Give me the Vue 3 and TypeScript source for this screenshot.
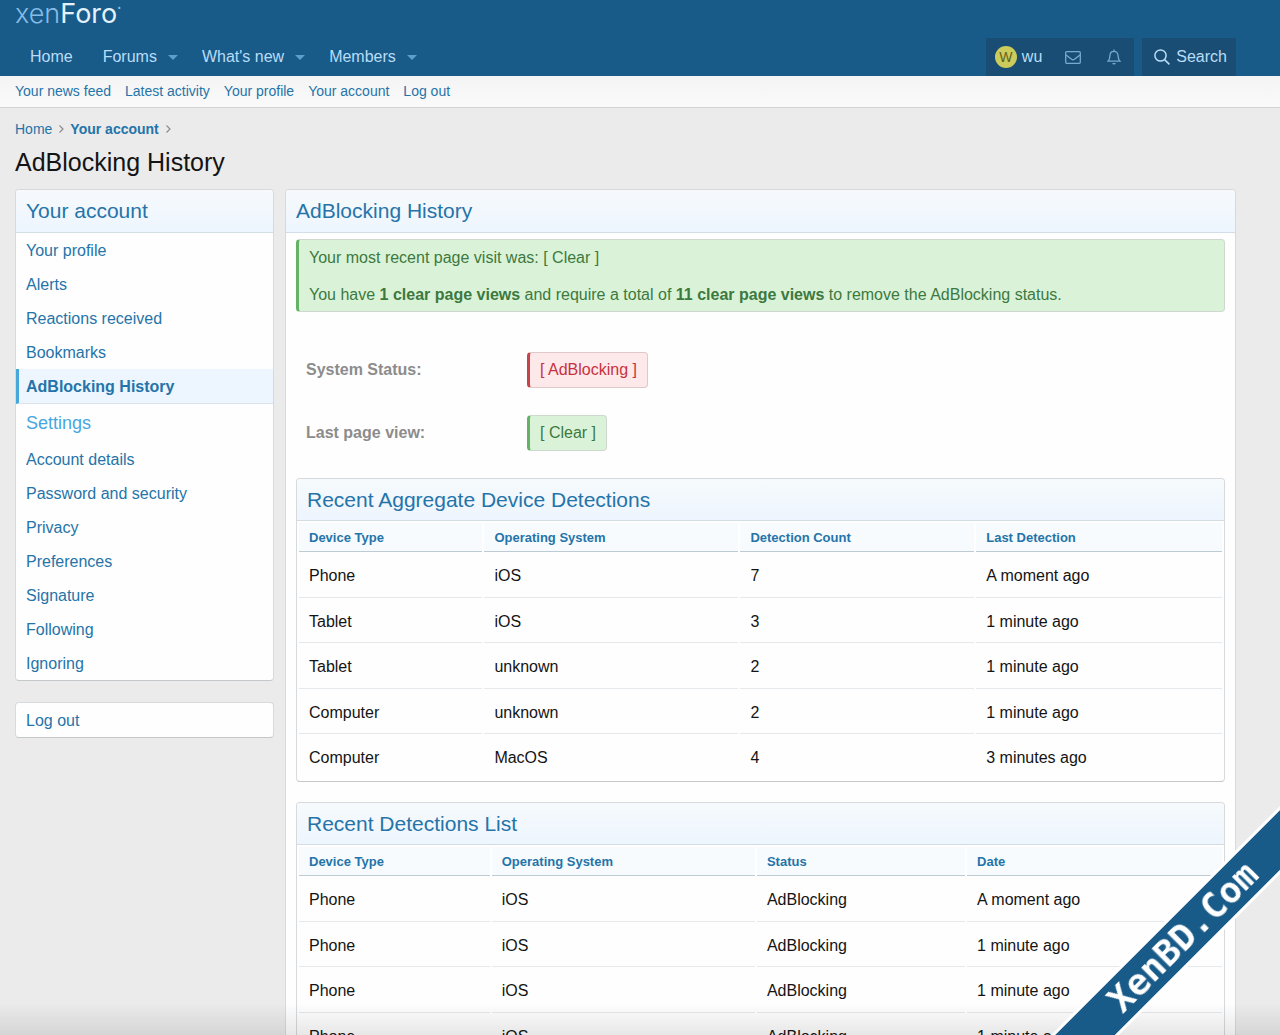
<script setup lang="ts">
interface NavItem {
  label: string
  menu: boolean
}

interface DataTable {
  id: string
  title: string
  columns: string[]
  rows: string[][]
}

const navItems: NavItem[] = [
  { label: 'Home', menu: false },
  { label: 'Forums', menu: true },
  { label: "What's new", menu: true },
  { label: 'Members', menu: true },
]

const subLinks: string[] = ['Your news feed', 'Latest activity', 'Your profile', 'Your account', 'Log out']

const accountLinks: string[] = ['Your profile', 'Alerts', 'Reactions received', 'Bookmarks', 'AdBlocking History']
const settingsLinks: string[] = [
  'Account details',
  'Password and security',
  'Privacy',
  'Preferences',
  'Signature',
  'Following',
  'Ignoring',
]
const current = 'AdBlocking History'

const tables: DataTable[] = [
  {
    id: 'aggregate',
    title: 'Recent Aggregate Device Detections',
    columns: ['Device Type', 'Operating System', 'Detection Count', 'Last Detection'],
    rows: [
      ['Phone', 'iOS', '7', 'A moment ago'],
      ['Tablet', 'iOS', '3', '1 minute ago'],
      ['Tablet', 'unknown', '2', '1 minute ago'],
      ['Computer', 'unknown', '2', '1 minute ago'],
      ['Computer', 'MacOS', '4', '3 minutes ago'],
    ],
  },
  {
    id: 'list',
    title: 'Recent Detections List',
    columns: ['Device Type', 'Operating System', 'Status', 'Date'],
    rows: [
      ['Phone', 'iOS', 'AdBlocking', 'A moment ago'],
      ['Phone', 'iOS', 'AdBlocking', '1 minute ago'],
      ['Phone', 'iOS', 'AdBlocking', '1 minute ago'],
      ['Phone', 'iOS', 'AdBlocking', '1 minute ago'],
    ],
  },
]
</script>

<template>
  <div class="page">
    <header class="top">
      <a class="logo" href="#"><span class="logo-xen">xen</span>Foro<span class="logo-dot">•</span></a>
      <nav class="nav">
        <ul class="nav-list">
          <li v-for="item in navItems" :key="item.label" class="nav-item">
            <a href="#">{{ item.label }}</a>
            <button v-if="item.menu" class="caret" type="button" :aria-label="'Toggle ' + item.label">
              <svg width="10" height="5" viewBox="0 0 10 5"><path d="M0 0h10L5 5z" fill="currentColor" /></svg>
            </button>
          </li>
        </ul>
        <div class="tools">
          <div class="tool-group">
            <a class="user" href="#"><span class="avatar">W</span>wu</a>
            <button class="icon-btn" type="button" aria-label="Conversations">
              <svg width="16" height="13" viewBox="0 0 16 13" fill="none" stroke="currentColor" stroke-width="1.3">
                <rect x=".7" y=".7" width="14.6" height="11.6" rx="1" />
                <path d="M1 4l5.600 4.300q1.400 1 2.800 0L15 4" />
              </svg>
            </button>
            <button class="icon-btn" type="button" aria-label="Alerts">
              <svg width="14" height="16" viewBox="0 0 14 16" fill="none" stroke="currentColor" stroke-width="1.3">
                <path d="M7 .4v1.800M1 12.200h12c-1.300-1.300-1.900-2.300-1.900-5.200 0-2.800-1.700-4.600-4.100-4.600S2.900 4.200 2.900 7c0 2.900-.6 3.900-1.900 5.200z" />
                <path d="M5.300 14a1.700 1.500 0 0 0 3.400 0z" fill="currentColor" stroke="none" />
              </svg>
            </button>
          </div>
          <button class="search" type="button">
            <svg width="16" height="16" viewBox="0 0 16 16" fill="none" stroke="currentColor" stroke-width="1.5">
              <circle cx="6.500" cy="6.500" r="5.600" />
              <path d="M10.600 10.600L15.400 15.400" />
            </svg>
            Search
          </button>
        </div>
      </nav>
    </header>

    <nav class="subnav">
      <a v-for="link in subLinks" :key="link" href="#">{{ link }}</a>
    </nav>

    <div class="body">
      <nav class="crumbs">
        <a href="#">Home</a>
        <svg width="5" height="8" viewBox="0 0 5 8"><path d="M.5.5L4 4 .5 7.500" fill="none" stroke="#8c8c8c" stroke-width="1.200" /></svg>
        <a class="strong" href="#">Your account</a>
        <svg width="5" height="8" viewBox="0 0 5 8"><path d="M.5.5L4 4 .5 7.500" fill="none" stroke="#8c8c8c" stroke-width="1.200" /></svg>
      </nav>
      <h1>AdBlocking History</h1>

      <div class="columns">
        <aside class="side">
          <div class="block">
            <h2 class="block-head outer">Your account</h2>
            <a v-for="link in accountLinks" :key="link" class="side-link" :class="{ active: link === current }" href="#">{{ link }}</a>
            <h3 class="side-sub">Settings</h3>
            <a v-for="link in settingsLinks" :key="link" class="side-link" href="#">{{ link }}</a>
          </div>
          <div class="block">
            <a class="side-link" href="#">Log out</a>
          </div>
        </aside>

        <main class="block main">
          <h2 class="block-head outer">AdBlocking History</h2>
          <div class="main-body">
            <div class="notice good">
              <p>Your most recent page visit was: [ Clear ]</p>
              <p>You have <strong>1 clear page views</strong> and require a total of <strong>11 clear page views</strong> to remove the AdBlocking status.</p>
            </div>

            <dl class="facts">
              <div class="fact">
                <dt>System Status:</dt>
                <dd class="badge bad">[ AdBlocking ]</dd>
              </div>
              <div class="fact">
                <dt>Last page view:</dt>
                <dd class="badge good">[ Clear ]</dd>
              </div>
            </dl>

            <section v-for="table in tables" :key="table.id" class="block">
              <h2 class="block-head">{{ table.title }}</h2>
              <table :class="table.id">
                <thead>
                  <tr>
                    <th v-for="column in table.columns" :key="column" scope="col">{{ column }}</th>
                  </tr>
                </thead>
                <tbody>
                  <tr v-for="(row, r) in table.rows" :key="r">
                    <td v-for="(cell, c) in row" :key="c">{{ cell }}</td>
                  </tr>
                </tbody>
              </table>
            </section>
          </div>
        </main>
      </div>
    </div>

    <div class="shade"></div>
    <div class="ribbon">XenBD.Com</div>
  </div>
</template>

<style>
body {
  margin: 0;
  background: #ebebeb;
}
</style>

<style scoped>
.page {
  height: 100vh;
  overflow: hidden;
  background: #ebebeb;
  color: #141414;
  font: 16px/22px "Liberation Sans", Arial, sans-serif;
}

a {
  color: #2574a9;
  text-decoration: none;
}

h1,
h2,
h3,
p,
dl,
dd,
ul {
  margin: 0;
  padding: 0;
  font-weight: 400;
}

button {
  display: flex;
  align-items: center;
  border: 0;
  padding: 0;
  background: none;
  color: inherit;
  font: inherit;
}

.top {
  padding: 0 44px 0 15px;
  background: #185a88;
}

.logo {
  display: block;
  height: 38px;
  color: #e3f2fc;
  font: 400 27px/28px Inter, sans-serif;
}

.logo-xen {
  color: #86bce6;
  font-weight: 300;
}

.logo-dot {
  color: #86bce6;
  font-size: 7px;
  line-height: 1px;
  vertical-align: 13px;
}

.nav {
  display: flex;
  justify-content: space-between;
  height: 38px;
  color: #b8ddf8;
}

.nav a {
  color: inherit;
}

.nav-list {
  display: flex;
  gap: 24px;
  padding-left: 15px;
  list-style: none;
}

.nav-item {
  display: flex;
  align-items: center;
  gap: 11px;
}

.nav-item:first-child {
  margin-right: 6px;
}

.caret {
  color: #5f9dcb;
}

.tools {
  display: flex;
  gap: 8px;
}

.tool-group,
.search {
  display: flex;
  align-items: center;
  background: #194d73;
}

.tool-group {
  gap: 26px;
  padding: 0 13px 0 9px;
}

.user {
  display: flex;
  align-items: center;
  gap: 5px;
  margin-right: -3px;
}

.avatar {
  width: 22px;
  border-radius: 50%;
  background: #cccc5c;
  color: #62621f;
  font-size: 14px;
  text-align: center;
}

.icon-btn {
  color: #76abd2;
}

.search {
  gap: 6px;
  padding: 0 9px 0 12px;
}

.subnav {
  display: flex;
  gap: 14px;
  padding: 0 15px;
  border-bottom: 1px solid #d4d4d4;
  background: linear-gradient(#f4f4f4, #fafafa);
  font-size: 14px;
  line-height: 31px;
}

.body {
  padding: 10px 44px 0 15px;
}

.crumbs {
  display: flex;
  align-items: center;
  gap: 7px;
  font-size: 14px;
}

.crumbs .strong {
  margin-left: -1px;
  font-weight: 700;
}

h1 {
  padding: 6px 0 11px;
  font-size: 25px;
  line-height: 32px;
}

.columns {
  display: flex;
  align-items: flex-start;
  gap: 11px;
}

.side {
  flex: 0 0 259px;
}

.main {
  flex: 1;
}

.block {
  box-sizing: border-box;
  margin-bottom: 21px;
  border: 1px solid #d6dadd;
  border-bottom-color: #c4c8ca;
  border-radius: 4px;
  background: #fefefe;
  overflow: hidden;
}

.main .block {
  margin-bottom: 20px;
}

.block-head {
  padding: 10px;
  border-bottom: 1px solid #d3dde4;
  background: linear-gradient(#f6fafc, #edf5fe);
  color: #2574a9;
  font-size: 21px;
  line-height: 21px;
}

.outer {
  padding-bottom: 11px;
}

.side-link {
  display: block;
  padding: 7px 10px 5px;
}

.active {
  padding-left: 7px;
  border-left: 3px solid #47a7d8;
  border-bottom: 1px solid #dae3ea;
  background: #edf5fe;
  font-weight: 700;
}

.side-sub {
  padding: 8px 10px;
  color: #47a7e0;
  font-size: 18px;
  line-height: 22px;
}

.main-body {
  padding: 6px 10px;
}

.notice,
.badge {
  border: 1px solid #cfd8cf;
  border-left-width: 3px;
  border-radius: 4px;
  padding: 7px 10px;
}

.notice p + p {
  margin-top: 15px;
}

.notice.notice {
  padding: 7px 10px 5px;
}

.good {
  border-left-color: #63b265;
  background: #daf3d8;
  color: #3d793f;
}

.bad {
  border-color: #e0c8c8;
  border-left-color: #c84448;
  background: #fde9e9;
  color: #c8323e;
}

.facts {
  display: flex;
  flex-direction: column;
  gap: 27px;
  padding: 40px 10px 27px;
}

.fact {
  display: flex;
  align-items: center;
}

.badge {
  padding: 6px 10px;
}

dt {
  flex: 0 0 221px;
  color: #8c8c8c;
  font-weight: 700;
}

table {
  width: 100%;
  table-layout: fixed;
  border-spacing: 2px;
}

th,
td {
  box-sizing: border-box;
  padding: 0 10px;
  text-align: left;
}

th {
  height: 29px;
  border-bottom: 1px solid #bccbd4;
  background: #f7fbfd;
  color: #2574a9;
  font-size: 13px;
  line-height: 15px;
}

td {
  height: 44px;
  padding-top: 1px;
  border-bottom: 1px solid #e6e9eb;
}

tr:nth-child(even) td {
  height: 43px;
}

tr:last-child td {
  height: 43px;
  border-bottom: 0;
}

.aggregate th:nth-child(1) {
  width: 20%;
}

.aggregate th:nth-child(2) {
  width: 27.7%;
}

.aggregate th:nth-child(3) {
  width: 25.5%;
}

.list th:nth-child(1) {
  width: 20.8%;
}

.list th:nth-child(2) {
  width: 28.7%;
}

.list th:nth-child(3) {
  width: 22.7%;
}

.shade {
  position: fixed;
  right: 0;
  bottom: 0;
  left: 0;
  height: 32px;
  background: linear-gradient(transparent, rgba(0, 0, 0, 0.09));
  pointer-events: none;
}

.ribbon {
  position: fixed;
  right: -103px;
  bottom: 74px;
  width: 400px;
  border: solid #fff;
  border-width: 3px 0;
  background: #185a88;
  color: #fff;
  font: 700 36px/42px "DejaVu Sans Mono", monospace;
  text-align: center;
  transform: rotate(-45deg);
}
</style>
